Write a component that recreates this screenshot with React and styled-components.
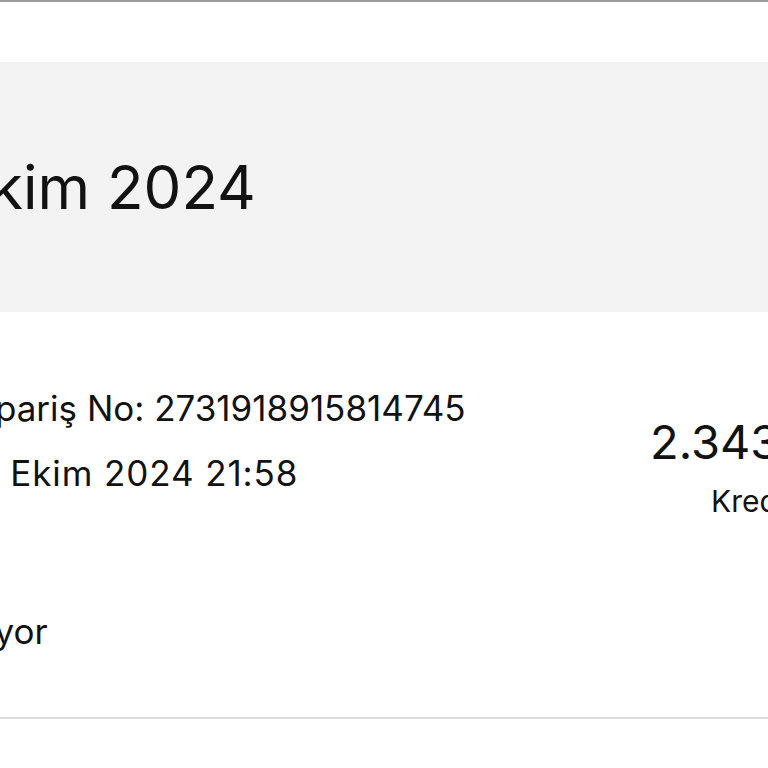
import React from "react"
import styled, { createGlobalStyle } from "styled-components"

const Global = createGlobalStyle`
  html, body {
    margin: 0;
    padding: 0;
    background: #fff;
    overflow: hidden;
  }
  body {
    font-family: Inter, "Open Sans", sans-serif;
    color: #121212;
  }
`

const Page = styled.div`
  width: 768px;
  border-top: 2px solid #9b9b9b;
`

const TopBar = styled.div`
  height: 60px;
  background: #fff;
`

const Summary = styled.section`
  height: 250px;
  background: #f3f3f3;
  display: flex;
  align-items: center;
`

const Heading = styled.h1`
  margin: 0 0 0 -46px;
  font-size: 60px;
  font-weight: 400;
  line-height: 1;
  white-space: nowrap;
`

const OrderCard = styled.section`
  display: flex;
  padding: 64px 0 53px;
  border-bottom: 2px solid #dcdcdc;
`

const Details = styled.div`
  flex-shrink: 0;
  width: 688px;
  margin-left: -36px;
  display: flex;
  flex-direction: column;
`

const Line = styled.div`
  font-size: 35px;
  line-height: 65px;
  white-space: nowrap;
  letter-spacing: ${(p) => p.$spacing || 0}px;
  margin-top: ${(p) => p.$gap || 0}px;
  margin-left: ${(p) => p.$shift || 0}px;
`

const Payment = styled.div`
  flex-shrink: 0;
  margin-top: 36px;
  margin-left: -2px;
  display: flex;
  flex-direction: column;
  white-space: nowrap;
`

const Amount = styled.div`
  font-size: 47px;
  line-height: 60px;
`

const Method = styled.div`
  font-size: 30px;
  line-height: 40px;
  margin-top: 9px;
  padding-left: 61px;
`

export default function App() {
  return (
    <>
      <Global />
      <Page>
        <TopBar />
        <Summary>
          <Heading>Ekim 2024</Heading>
        </Summary>
        <OrderCard>
          <Details>
            <Line>Sipariş No: 2731918915814745</Line>
            <Line $shift={-9} $spacing={0.9}>22 Ekim 2024 21:58</Line>
            <Line $gap={93} $shift={-114}>Hazırlanıyor</Line>
          </Details>
          <Payment>
            <Amount>2.343,00 TL</Amount>
            <Method>Kredi Kartı</Method>
          </Payment>
        </OrderCard>
      </Page>
    </>
  )
}
